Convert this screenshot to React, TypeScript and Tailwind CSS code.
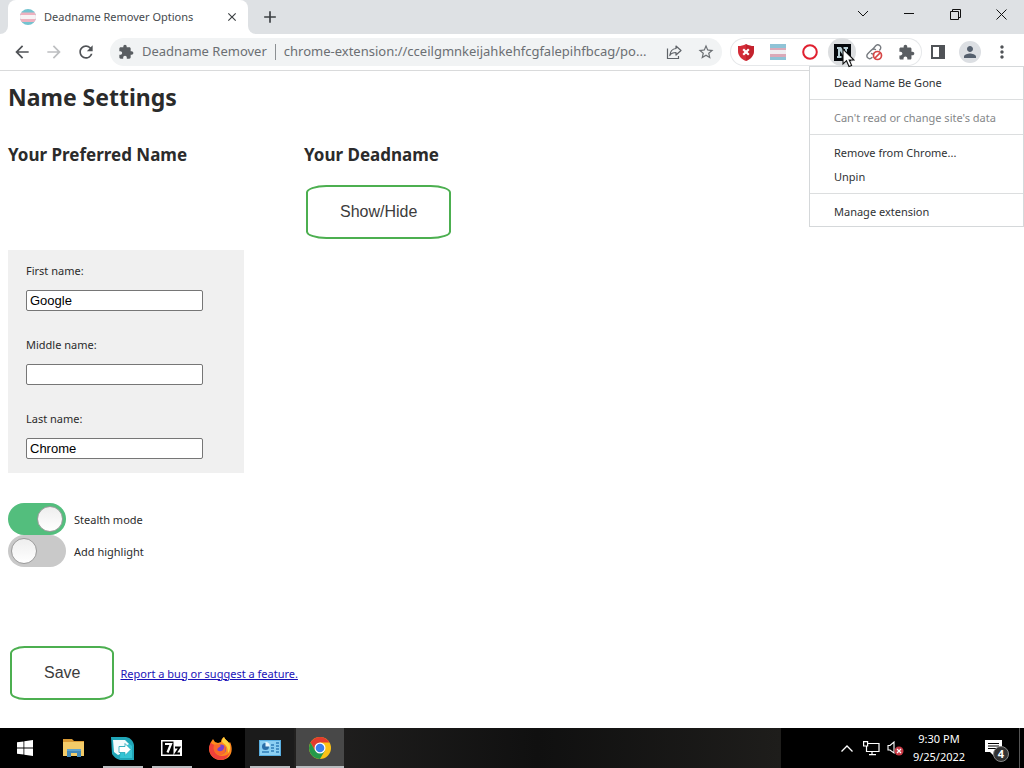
import React from 'react'
import { MdAdd, MdArrowBack, MdArrowForward, MdClose, MdMoreVert, MdRefresh, MdStarBorder } from 'react-icons/md'

const iconButton = "w-8 h-8 shrink-0 flex items-center justify-center"

const PuzzleIcon = ({ size }: { size: number }) => (
  <svg className="shrink-0" width={size} height={size} viewBox="0 0 24 24" fill="#5a5e62">
    <path d="M20.500 11H19V7c0-1.100-.9-2-2-2h-4V3.500C13 2.120 11.880 1 10.500 1S8 2.120 8 3.500V5H4c-1.100 0-1.990.9-1.990 2v3.800H3.500c1.490 0 2.700 1.210 2.700 2.700s-1.210 2.700-2.700 2.700H2V20c0 1.100.9 2 2 2h3.800v-1.500c0-1.490 1.210-2.700 2.700-2.700 1.490 0 2.700 1.210 2.700 2.700V22H17c1.100 0 2-.9 2-2v-4h1.500c1.380 0 2.500-1.120 2.500-2.500S21.880 11 20.500 11z" />
  </svg>
)

const PersonIcon = () => (
  <svg width="18" height="18" viewBox="0 0 24 24" fill="#55606e">
    <path d="M12 12c2.210 0 4-1.790 4-4s-1.790-4-4-4-4 1.790-4 4 1.790 4 4 4zm0 2c-2.670 0-8 1.340-8 4v2h16v-2c0-2.660-5.330-4-8-4z" />
  </svg>
)

const ShareIcon = () => (
  <svg width="16" height="16" viewBox="0 0 16 16" fill="none" stroke="#5f6368" strokeWidth="1.200">
    <path d="M1.500 4.500V14.500H12.500V12" />
    <path d="M10 2l5 4.500-5 4.500V8.500C7 8.500 5 9.300 3.800 11.500 4.200 7.500 6.500 4.800 10 4.500z" strokeLinejoin="round" />
  </svg>
)

const ShieldIcon = () => (
  <svg width="16" height="17" viewBox="0 0 16 17">
    <path d="M8 0c2.500 1.500 5 2 8 2v5c0 4.500-3 8-8 10C3 15 0 11.500 0 7V2c3 0 5.500-.5 8-2z" fill="#d42c38" />
    <path d="M8 0c2.500 1.500 5 2 8 2v5c0 4.500-3 8-8 10z" fill="#a9151f" opacity=".4" />
    <path d="M5.200 5.200l5.600 5.600M10.800 5.200l-5.600 5.600" stroke="#fff" strokeWidth="2.200" />
  </svg>
)

const FlagIcon = () => (
  <svg width="16" height="16" viewBox="0 0 16 16">
    <path d="M0 0h16v16H0z" fill="#8fc3d6" />
    <path d="M0 4h16v9H0z" fill="#dba9b8" />
    <path d="M0 6h16v4H0z" fill="#f1eef1" />
  </svg>
)

const NIcon = () => (
  <svg width="17" height="17" viewBox="0 0 17 17">
    <path d="M0 0h17v17H0z" fill="#05080c" />
    <path d="M3 3h4l4 6V5H9.500V3H14v2h-1v9h-2L6 7v5h1.500v2H3v-2h1V5H3z" fill="#b9cfd6" />
  </svg>
)

const LinkIcon = () => (
  <svg width="17" height="17" viewBox="0 0 17 17" fill="none">
    <g stroke="#777b80" strokeWidth="1.400" strokeLinecap="round">
      <path d="M7 5l2-2.500c1.500-2 3.300-2.200 4.700-1 1.500 1.300 1.300 3 0 4.500" />
      <path d="M9.500 5.500C8 4.500 6.500 5 5.500 6L2 9.500c-1.500 1.500-1.500 3.300-.3 4.300 1.300 1.200 3 1 4.300-.3" />
      <path d="M5.500 9.500c1 .8 2 .6 3-.5" />
    </g>
    <circle cx="11.500" cy="11.500" r="4" fill="#fff" stroke="#d64545" strokeWidth="1.700" />
    <path d="M9 14l5-5" stroke="#d64545" strokeWidth="1.700" />
  </svg>
)

const Cursor = () => (
  <svg className="absolute left-4 top-3 z-20 pointer-events-none" width="13" height="20" viewBox="0 0 13 20">
    <path d="M1 1v15l3.500-3.300L7 18.500l2.600-1.100L7.200 12H12z" fill="#fff" stroke="#111" strokeWidth="1.100" />
  </svg>
)

const TransLogo = () => (
  <svg width="16" height="16" viewBox="0 0 16 16">
    <clipPath id="disc"><circle cx="8" cy="8" r="8" /></clipPath>
    <g clipPath="url(#disc)">
      <path d="M0 0h16v16H0z" fill="#74c3d0" />
      <path d="M0 3.500h16v9.500H0z" fill="#eeb1bf" />
      <path d="M0 6h16v4H0z" fill="#f7f3f5" />
    </g>
  </svg>
)

const WindowsIcon = () => (
  <svg width="16" height="16" viewBox="0 0 16 16" fill="#fff">
    <path d="M0 2.300L6.500 1.400V7.600H0zM7.300 1.300L16 0v7.600H7.300zM0 8.400h6.500v6.200L0 13.700zM7.300 8.400H16V16l-8.700-1.300z" />
  </svg>
)

const FolderIcon = () => (
  <svg width="22" height="19" viewBox="0 0 22 19">
    <path d="M0 0h9l2 2h10v5H0z" fill="#d99a35" />
    <path d="M0 3h21v14H0z" fill="#f3cb68" />
    <path d="M4 10h14v8h-4v-4H8v4H4z" fill="#4288b8" />
    <path d="M4 10h14v2H4z" fill="#5fa3cc" />
  </svg>
)

const ArrowAppIcon = () => (
  <svg width="23" height="23" viewBox="0 0 23 23">
    <path d="M0 0h15c5 1 7 4 8 8v15H9c-4-1-6-3-8-6z" fill="#20a6b8" />
    <path d="M9 21h12V9l-4-3-7 4z" fill="#35c4d4" />
    <path d="M2 3h12l4 4-3 2H9v8l-2 1-4-3z" fill="#f2fbfc" />
    <path d="M8 9.500h6v-3l6 6-6 6v-3H8z" fill="#fff" stroke="#20a6b8" strokeWidth=".8" />
  </svg>
)

const SevenZipIcon = () => (
  <svg width="21" height="16" viewBox="0 0 21 16" fill="none">
    <path d="M0 0h21v16H0z" fill="#fff" />
    <path d="M1.500 1.500h11v13h-11z" fill="#000" />
    <path d="M4 4h6l-3.500 8.500" stroke="#fff" strokeWidth="2.200" />
    <path d="M14 7.500h4.500l-4 6H19" stroke="#000" strokeWidth="1.800" />
  </svg>
)

const FirefoxIcon = () => (
  <svg width="23" height="23" viewBox="0 0 23 23">
    <path d="M2 5l2-3 2 3 3 1 3-1c0-2 1-4 3-5 1 3 3 3 5 6l1-1c4 8 1 18-9 18C4 23 0 17 0 11z" fill="#ff8a1e" />
    <path d="M0 11c0-2 1-4 2-6 0 2 2 2 4 3l-1 3c0 5 4 8 8 8 3 0 6-1 8-4-2 5-5 8-9 8C4 23 0 17 0 11z" fill="#f0413a" />
    <circle cx="12" cy="12.500" r="5" fill="#7a3fd0" />
    <path d="M5 8c3-1 5-1 7 1l-3 2c-1 1-1 3 1 3 3 1 6-2 5-6 2 2 3 9-3 10C7 19 3 13 5 8z" fill="#fb6a2a" />
    <path d="M15 0c1 3 3 3 5 6 2 4 1 8-1 10 0-6-2-8-5-10-2-2-1-4 1-6z" fill="#ffd23c" />
  </svg>
)

const PanelIcon = () => (
  <svg width="22" height="16" viewBox="0 0 22 16">
    <path d="M0 0h22v16H0z" fill="#58aee0" />
    <path d="M1 1h20v14H1z" fill="#8bcff2" />
    <circle cx="6.500" cy="6.500" r="3.500" fill="#2b6ea8" />
    <path d="M6.500 6.500V2A4.500 4.500 0 0111 6.500z" fill="#e8f6fd" />
    <path d="M12 5h3M12 8h3M12 11h3M17 3h3M17 6h3M17 9h3M17 12h3M3 12h7" stroke="#2f7db8" strokeWidth="1.500" />
  </svg>
)

const ChromeIcon = () => (
  <svg width="22" height="22" viewBox="0 0 22 22">
    <circle cx="11" cy="11" r="11" fill="#fbc116" />
    <path d="M1.500 5.500A11 11 0 0120.500 5.500H11L6.200 13.700z" fill="#e33b2e" />
    <path d="M1.500 5.500A11 11 0 0011 22l4.800-8.300L6.200 13.700z" fill="#24994b" />
    <circle cx="11" cy="11" r="5.500" fill="#fff" />
    <circle cx="11" cy="11" r="4.300" fill="#3b7ded" />
  </svg>
)

const tasks = [
  { name: "File Explorer", icon: <FolderIcon />, open: false },
  { name: "Transfer", icon: <ArrowAppIcon />, open: true },
  { name: "7-Zip", icon: <SevenZipIcon />, open: true },
  { name: "Firefox", icon: <FirefoxIcon />, open: false },
  { name: "Control Panel", icon: <PanelIcon />, open: true },
]

const TabStrip = () => (
  <div className="h-[34px] bg-[#dee1e4] flex items-start">
    <span className="w-2 h-2 self-end bg-white"><span className="block h-full bg-[#dee1e4] rounded-br-lg" /></span>
    <div className="w-60 h-full bg-white rounded-t-lg flex items-center pl-3 pr-2">
      <TransLogo />
      <p className="ml-2 flex-1 text-[11px] text-[#45494d] whitespace-nowrap">Deadname Remover Options</p>
      <button aria-label="Close tab" className="w-4 h-4 flex items-center justify-center text-[#3c4043]"><MdClose size={14} /></button>
    </div>
    <span className="w-2 h-2 self-end bg-white"><span className="block h-full bg-[#dee1e4] rounded-bl-lg" /></span>
    <button aria-label="New tab" className="w-7 h-full flex items-center justify-center text-[#3c4043]"><MdAdd size={20} /></button>
    <div className="ml-auto h-7 flex text-[#111]">
      <button aria-label="Search tabs" className="w-[46px] flex items-center justify-center">
        <svg width="12" height="8" viewBox="0 0 12 8" fill="none" stroke="currentColor"><path d="M1 1l5 5 5-5" /></svg>
      </button>
      <button aria-label="Minimize" className="w-[46px] flex items-center justify-center">
        <svg width="10" height="2" viewBox="0 0 10 2"><path d="M0 0h10v1H0z" fill="currentColor" /></svg>
      </button>
      <button aria-label="Restore" className="w-[46px] flex items-center justify-center">
        <svg width="11" height="11" viewBox="0 0 11 11" fill="none" stroke="currentColor"><path d="M.5 2.500h8v8h-8zM2.500 2.500V.5h8v8h-2" /></svg>
      </button>
      <button aria-label="Close" className="w-[46px] flex items-center justify-center">
        <svg width="11" height="11" viewBox="0 0 11 11" stroke="currentColor"><path d="M.5.5l10 10M10.500.5l-10 10" /></svg>
      </button>
    </div>
  </div>
)

const menuItem = "block w-full h-6 pl-6 text-left whitespace-nowrap"

const ExtensionMenu = () => (
  <div className="absolute right-0 top-8 z-10 w-[215px] bg-white border border-[#d5d8da] pt-1 pb-0.5 text-[11px] leading-6 text-[#303234]">
    <button className={menuItem}>Dead Name Be Gone</button>
    <hr className="mt-1 mb-1.5 border-[#dcdedf]" />
    <button disabled className={menuItem + " text-[#858789]"}>Can't read or change site's data</button>
    <hr className="mt-1 mb-1.5 border-[#dcdedf]" />
    <button className={menuItem}>Remove from Chrome...</button>
    <button className={menuItem}>Unpin</button>
    <hr className="mt-1 mb-1.5 border-[#dcdedf]" />
    <button className={menuItem}>Manage extension</button>
  </div>
)

const Toolbar = () => (
  <div className="relative h-[37px] bg-white border-b border-[#d9dadb] flex items-center pl-1.5 pr-1.5 text-[#505357]">
    <button aria-label="Back" className={iconButton}><MdArrowBack size={20} /></button>
    <button aria-label="Forward" className={iconButton + " text-[#bdbfc1]"}><MdArrowForward size={20} /></button>
    <button aria-label="Reload" className={iconButton}><MdRefresh size={20} /></button>
    <div className="ml-2 mr-2 h-7 flex-1 min-w-0 rounded-full bg-[#f1f3f4] flex items-center pl-2 text-[13px] text-[#6b6f73] whitespace-nowrap">
      <PuzzleIcon size={16} />
      <span className="ml-2">Deadname Remover</span>
      <span className="w-px h-4 mx-2 bg-[#8c9093] shrink-0" />
      <span className="flex-1 min-w-0">chrome-extension://cceilgmnkeijahkehfcgfalepihfbcag/po...</span>
      <button aria-label="Share" className={iconButton}><ShareIcon /></button>
      <button aria-label="Bookmark" className={iconButton}><MdStarBorder size={18} /></button>
    </div>
    <div className="flex items-center h-7 rounded-full inset-ring inset-ring-[#e6e8ea]">
      <button aria-label="Blocker" className={iconButton}><ShieldIcon /></button>
      <button aria-label="Deadname Remover" className={iconButton}><FlagIcon /></button>
      <button aria-label="Recorder" className={iconButton}>
        <svg width="16" height="16" viewBox="0 0 16 16"><circle cx="8" cy="8" r="6.800" fill="none" stroke="#e0202f" strokeWidth="2" /></svg>
      </button>
      <div className="relative">
        <button aria-label="Dead Name Be Gone" className={iconButton}>
          <span className="w-7 h-7 rounded-full bg-[#dcdee0] flex items-center justify-center"><NIcon /></span>
        </button>
        <Cursor />
      </div>
      <button aria-label="Link blocker" className={iconButton}><LinkIcon /></button>
      <button aria-label="Extensions" className={iconButton}><PuzzleIcon size={17} /></button>
    </div>
    <button aria-label="Side panel" className={iconButton}>
      <svg width="14" height="14" viewBox="0 0 14 14"><path d="M0 0h14v14H0zM2 2v10h6V2z" fill="currentColor" fillRule="evenodd" /></svg>
    </button>
    <button aria-label="Profile" className={iconButton}>
      <span className="w-[22px] h-[22px] rounded-full bg-[#dcdfe3] flex items-center justify-center"><PersonIcon /></span>
    </button>
    <button aria-label="Menu" className={iconButton}><MdMoreVert size={20} /></button>
    <ExtensionMenu />
  </div>
)

const NameField = ({ id, label, value }: { id: string, label: string, value: string }) => (
  <div>
    <label htmlFor={id} className="block text-[11px] leading-5">{label}</label>
    <input id={id} type="text" defaultValue={value} className="mt-[9px] block w-[177px] h-[21px] px-[3px] bg-white border border-[#767676] rounded-xs font-['Liberation_Sans',Arial,sans-serif] text-[13px] text-black" />
  </div>
)

const Toggle = ({ id, label, checked }: { id: string, label: string, checked: boolean }) => (
  <div className="flex items-center h-8">
    <input
      id={id}
      type="checkbox"
      defaultChecked={checked}
      className="appearance-none w-[58px] h-8 rounded-full bg-[#c9c9c9] checked:bg-[#53be7d] flex items-center px-[3px] checked:justify-end before:block before:w-[26px] before:h-[26px] before:rounded-full before:border before:border-[#9b9b9b] before:bg-linear-to-b before:from-[#eeeeee] before:to-white"
    />
    <label htmlFor={id} className="ml-2 pt-0.5 text-[11px]">{label}</label>
  </div>
)

const outlineButton = "h-[54px] px-8 border-2 border-[#4caf50] rounded-[14%] bg-white font-['Liberation_Sans',Arial,sans-serif] text-[16px] text-[#3c3c3c]"

const Taskbar = () => (
  <div className="h-10 bg-black flex text-white">
    <button aria-label="Start" className="w-[49px] flex items-center justify-center"><WindowsIcon /></button>
    {tasks.map((task) => {
      return (
        <button key={task.name} aria-label={task.name} className={"w-[49px] flex flex-col items-center " + (task.name === "Control Panel" ? "bg-[#1b1b1b]" : "")}>
          <span className="flex-1 flex items-center pt-0.5">{task.icon}</span>
          <span className={"w-10 h-0.5 " + (task.open ? "bg-[#b9bdc0]" : "")} />
        </button>
      )
    })}
    <div className="flex-1 flex bg-linear-to-r from-[#222120] via-[#101010] to-[#1e1d1b]">
      <button aria-label="Google Chrome" className="w-12 ml-0.5 flex flex-col items-center bg-[#484848]">
        <span className="flex-1 flex items-center pt-0.5"><ChromeIcon /></span>
        <span className="w-full h-0.5 bg-[#b9bdc0]" />
      </button>
    </div>
    <div className="w-[243px] flex items-center justify-end">
      <button aria-label="Show hidden icons" className="w-6 flex justify-center">
        <svg width="12" height="7" viewBox="0 0 12 7" fill="none" stroke="#fff" strokeWidth="1.300"><path d="M.5 6.500L6 1l5.500 5.500" /></svg>
      </button>
      <button aria-label="Network" className="w-6 flex justify-center">
        <svg width="17" height="15" viewBox="0 0 17 15" fill="none" stroke="#fff" strokeWidth="1.200"><path d="M5 2.500h11v8H3.500V5M.6.6h4V5h-4zM9 10.500v3M6 13.700h7" /></svg>
      </button>
      <button aria-label="Volume" className="w-6 flex justify-center">
        <svg width="17" height="15" viewBox="0 0 17 15" fill="none"><path d="M1 4.500h2L7 1v11L3 9H1z" stroke="#fff" strokeWidth="1.100" /><circle cx="12" cy="10" r="4.500" fill="#c93a46" /><path d="M10 8l4 4M14 8l-4 4" stroke="#fff" strokeWidth="1.200" /></svg>
      </button>
      <div className="w-16 text-[11px] leading-[18px] text-center whitespace-nowrap">
        <p>9:30 PM</p>
        <p>9/25/2022</p>
      </div>
      <button aria-label="Notifications" className="relative w-11 h-10 flex items-center justify-center">
        <svg width="17" height="17" viewBox="0 0 17 17"><path d="M0 0h17v12H9v4l-4-4H0z" fill="#fff" /><path d="M3 3.500h11M3 6h11M3 8.500h8" stroke="#000" /></svg>
        <span className="absolute right-1.5 bottom-1.5 w-4 h-4 rounded-full bg-[#333] border border-[#888] text-[11px] font-bold leading-[14px]">4</span>
      </button>
      <span className="w-px h-full ml-1 mr-1 bg-[#555]" />
    </div>
  </div>
)

const App = () => {
  return (
    <div className="min-h-screen flex flex-col bg-white font-['Noto_Sans','Segoe_UI',sans-serif]">
      <TabStrip />
      <Toolbar />
      <main className="flex-1 px-2 text-[#2b2b2b]">
        <h1 className="mt-2 text-[23px] leading-9 font-bold">Name Settings</h1>
        <div className="mt-7 grid grid-cols-[296px_1fr]">
          <h2 className="text-[17px] leading-6 font-bold">Your Preferred Name</h2>
          <div>
            <h2 className="text-[17px] leading-6 font-bold">Your Deadname</h2>
            <button className={outlineButton + " mt-[18px] ml-0.5"}>Show/Hide</button>
          </div>
        </div>
        <div className="mt-[11px] w-[236px] bg-[#f0f0f0] px-[18px] pt-[11px] pb-3.5 flex flex-col gap-6">
          <NameField id="first" label="First name:" value="Google" />
          <NameField id="middle" label="Middle name:" value="" />
          <NameField id="last" label="Last name:" value="Chrome" />
        </div>
        <div className="mt-[30px]">
          <Toggle id="stealth" label="Stealth mode" checked={true} />
          <Toggle id="highlight" label="Add highlight" checked={false} />
        </div>
        <div className="mt-[79px] pl-0.5 flex items-center gap-1.5">
          <button className={outlineButton}>Save</button>
          <a href="#" className="pt-0.5 text-[11px] text-[#1a12b8] underline">Report a bug or suggest a feature.</a>
        </div>
      </main>
      <Taskbar />
    </div>
  )
}

export default App
